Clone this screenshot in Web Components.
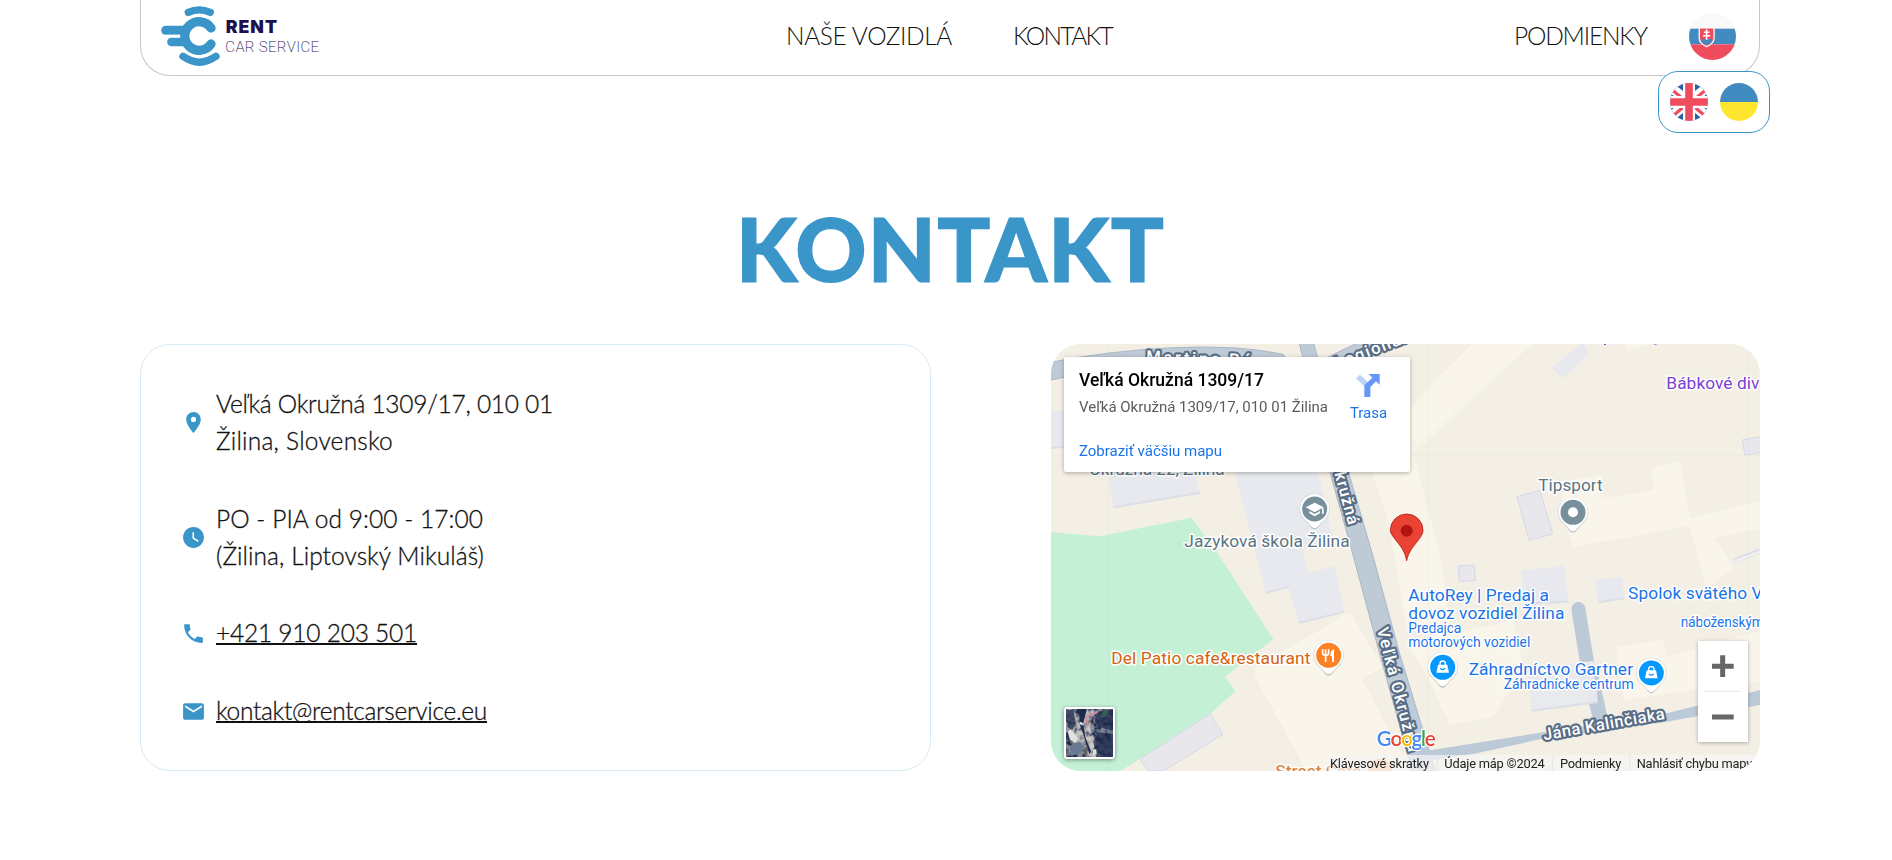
<!DOCTYPE html>
<html lang="sk">
<head>
<meta charset="utf-8">
<title>Kontakt – Rent Car Service</title>
<style>
html,body{margin:0;padding:0;background:#fff}
body{height:860px;overflow:hidden;font-family:Lato,"Open Sans",sans-serif;color:#111}
</style>
</head>
<body>
<rent-page></rent-page>
<script>
const define = (name, html, ready) => customElements.define(name, class extends HTMLElement {
  connectedCallback() {
    if (this.shadowRoot) return;
    const t = document.createElement('template');
    t.innerHTML = html;
    this.attachShadow({mode: 'open'}).append(t.content.cloneNode(true));
    if (ready) ready(this, this.shadowRoot);
  }
});

/* Text run whose tracking is adjusted to fill the width given in w */
define('track-text', `<style>:host{display:inline-block;white-space:nowrap}span{display:inline-block;white-space:pre;text-decoration:inherit}</style><span><slot></slot></span>`, (el, root) => {
  const s = root.querySelector('span'), w = +el.getAttribute('w');
  const n = el.textContent.length;
  s.style.letterSpacing = (w - s.getBoundingClientRect().width) / n + 'px';
  el.style.width = w + 'px';
});

define('brand-logo', `<style>:host{display:block;width:170px;height:75px}svg{display:block;overflow:visible}</style>
<svg width="170" height="75" viewBox="93 0 510 225">
<g fill="none" stroke="#3a95c9" stroke-linecap="round">
<path stroke-width="22" d="M175 37Q207 22 241 37"/>
<path stroke-width="22" d="M159 169Q208 204 258 169"/>
<path stroke-width="27" d="M107 91H165"/><path stroke-width="25" d="M124 126H162"/>
<path stroke="#fff" stroke-width="7" d="M112 108H162" opacity=".9"/>
<path stroke-width="28" d="M243 84A43 43 0 1 0 243 132"/></g>
<g fill="#1d104f">
<text x="287" y="100" font-family="Inter" font-weight="900" font-size="53" textLength="154">RENT</text>
<text x="286" y="155" font-family="Roboto" font-weight="200" font-size="45" textLength="281">CAR SERVICE</text></g>
</svg>`);

const flags = {
sk: `<rect width="60" height="60" fill="#f9f9f9"/><rect y="20" width="60" height="20" fill="#428bc1"/><rect y="40" width="60" height="20" fill="#ef4d5e"/>
<path d="M13 19H32V32Q32 39 22.5 43Q13 39 13 32Z" fill="#ef4d5e" stroke="#fff" stroke-width="1.6"/><path d="M15 35q3-3 5-1.500q2.500-2.500 5 0q3-1.500 5 1.500q-2 4-7.500 6.500q-5.500-2.500-7.500-6.500z" fill="#428bc1"/><path d="M22.500 21V34M19 24.500H26M18 29H27" stroke="#fff" stroke-width="2" fill="none"/>`,
gb: `<rect width="60" height="60" fill="#2d5fa4"/><path d="M0 6L60 54M60 6L0 54" stroke="#fff" stroke-width="15"/><path d="M2 10L28 31M58 10L32 31M2 54L26 34M58 54L34 34" stroke="#ef4d5e" stroke-width="5"/><path d="M30 0V60M0 30H60" stroke="#fff" stroke-width="19"/><path d="M30 0V60M0 30H60" stroke="#ef4d5e" stroke-width="12"/>`,
ua: `<rect width="60" height="30" fill="#428bc1"/><rect y="30" width="60" height="30" fill="#ffe62e"/>`};
define('flag-icon', `<style>:host{display:block;border-radius:50%;overflow:hidden}svg{display:block;width:100%;height:100%}</style><svg viewBox="0 0 60 60"></svg>`, (el, root) => {
  root.querySelector('svg').innerHTML = flags[el.getAttribute('code')];
});

define('lang-menu', `<style>:host{display:flex;box-sizing:border-box;width:112px;height:62px;border:1px solid #3a95c9;border-radius:20px;background:#fff;align-items:center;justify-content:center;gap:12px}
flag-icon{width:38px;height:38px}</style><flag-icon code="gb"></flag-icon><flag-icon code="ua"></flag-icon>`);

define('site-header', `<style>
:host{display:block;position:relative;box-sizing:border-box;width:1620px;height:76px;margin:0 auto 0 140px;border:1px solid #c8c8c8;border-top:0;border-radius:0 0 30px 30px}
header{display:grid;grid-template-columns:625px 165px 62px 99px 402px 133px 1fr;height:75px;padding-left:20px}
nav{display:contents}
a{font:300 24.500px/30px Lato;color:#111;padding-top:21px}
.k{grid-column:4}.p{grid-column:6}
.sk{width:47px;height:47px;margin:12.500px 0 0 42px}
lang-menu{position:absolute;left:1517px;top:71px}
</style>
<header><brand-logo></brand-logo><nav><a><track-text w="166">NAŠE VOZIDLÁ</track-text></a><a class="k"><track-text w="99">KONTAKT</track-text></a><a class="p"><track-text w="133">PODMIENKY</track-text></a></nav><flag-icon class="sk" code="sk"></flag-icon></header>
<lang-menu></lang-menu>`);

const icons = {
pin:'M12 2C8.130 2 5 5.130 5 9c0 5.250 7 13 7 13s7-7.750 7-13c0-3.870-3.130-7-7-7zm0 9.500a2.500 2.500 0 1 1 0-5 2.500 2.500 0 0 1 0 5z',
clock:'M12 2C6.500 2 2 6.500 2 12s4.500 10 10 10 10-4.500 10-10S17.500 2 12 2zm4.200 14.200L11 13V7h1.500v5.200l4.500 2.700-.8 1.300z',
phone:'M6.620 10.790c1.440 2.830 3.760 5.140 6.590 6.590l2.200-2.200c.27-.27.670-.36 1.020-.24 1.120.37 2.330.57 3.570.57.55 0 1 .45 1 1V20c0 .55-.45 1-1 1-9.390 0-17-7.610-17-17 0-.55.45-1 1-1h3.500c.55 0 1 .45 1 1 0 1.250.2 2.450.57 3.570.11.350.03.740-.25 1.020l-2.200 2.200z',
mail:'M20 4H4c-1.100 0-2 .9-2 2v12c0 1.100.9 2 2 2h16c1.100 0 2-.9 2-2V6c0-1.100-.9-2-2-2zm0 4l-8 5-8-5V6l8 5 8-5v2z'};
define('contact-row', `<style>:host{display:flex;align-items:center;gap:10px}svg{width:25px;height:25px;fill:#3a95c9;flex:none;position:relative;top:.5px}div{font:300 24.500px/37px Lato;color:#111;-webkit-text-stroke:.3px #111}</style>
<svg viewBox="0 0 24 24"><path/></svg><div><slot></slot></div>`, (el, root) => {
  root.querySelector('path').setAttribute('d', icons[el.getAttribute('icon')]);
});

define('contact-card', `<style>
:host{display:flex;flex-direction:column;gap:40.700px;box-sizing:border-box;width:791px;height:427px;border:1px solid #d9eaf4;border-radius:30px;padding:40px 40px 0}
a{text-decoration:none;color:inherit;display:block;height:37px;position:relative}
a::after{content:"";display:block;position:absolute;left:0;right:0;top:29px;height:2px;background:#111}
track-text{display:block}
</style>
<contact-row icon="pin"><track-text w="337">Veľká Okružná 1309/17, 010 01</track-text><track-text w="177">Žilina, Slovensko</track-text></contact-row>
<contact-row icon="clock"><track-text w="267">PO - PIA od 9:00 - 17:00</track-text><track-text w="268">(Žilina, Liptovský Mikuláš)</track-text></contact-row>
<contact-row icon="phone"><a><track-text w="201">+421 910 203 501</track-text></a></contact-row>
<contact-row icon="mail"><a><track-text w="271">kontakt@rentcarservice.eu</track-text></a></contact-row>`);

define('place-card', `<style>
:host{display:flex;justify-content:space-between;box-sizing:border-box;width:346px;height:115px;padding:13px 23px 0 15px;background:#fff;border-radius:2px;box-shadow:0 1px 4px rgba(0,0,0,.3);font:400 15px/18px Roboto}
.t{font:500 17.500px/20px Roboto;color:#000;display:block}.a{display:block;margin-top:8px;color:#5b5b5b}
.l{display:block;margin-top:26px;color:#1a73e8}.r{width:37px;color:#1a73e8;margin-top:4px}
svg{display:block;margin:0 0 7px 6px}
</style>
<div><track-text class="t" w="185">Veľká Okružná 1309/17</track-text><track-text class="a" w="249">Veľká Okružná 1309/17, 010 01 Žilina</track-text><track-text class="l" w="143">Zobraziť väčšiu mapu</track-text></div>
<div class="r"><svg width="24" height="23" viewBox="0 0 72 69"><path d="M0 13L12 2L36 25L24 36Z" fill="#bdd1fb"/><path d="M38 0H71V32L60 22L43 39V69H25V34L49 11Z" fill="#6596fa"/></svg><track-text w="37">Trasa</track-text></div>`);

define('zoom-control', `<style>:host{display:flex;flex-direction:column;align-items:center;width:50px;height:101px;background:#fff;box-shadow:0 1px 4px rgba(0,0,0,.3)}svg{display:block}</style>
<svg width="50" height="101" viewBox="0 0 150 303"><path d="M18 151H129" stroke="#e6e6e6" stroke-width="3"/><path d="M42 76H107M74 43V108M42 228H107" stroke="#666" stroke-width="15"/></svg>`);

define('sat-button', `<style>:host{display:block;box-sizing:border-box;width:51px;height:52px;border:2px solid #fff;border-radius:3px;background:#4d5362;box-shadow:0 1px 4px rgba(0,0,0,.4);overflow:hidden}svg{display:block}</style>
<svg width="47" height="48" viewBox="0 0 141 144">
<defs><filter id="g" x="0" y="0" width="1" height="1"><feTurbulence type="fractalNoise" baseFrequency=".06" numOctaves="3" seed="4"/><feColorMatrix values="2.4 0 0 0 -.85  2.4 0 0 0 -.83  2 0 0 0 -.55  0 0 0 0 .75"/></filter></defs>
<rect width="141" height="144" fill="#414b5c"/><path d="M45 0L68 0L62 50L85 130L141 144H60L0 75V0H20L35 30Z" fill="#a3a39c"/>
<path d="M68 5L105 0L82 20L70 55L90 100L82 144L60 85L55 40Z" fill="#b5b2aa"/>
<rect width="141" height="144" filter="url(#g)" opacity=".55"/>
<path d="M38 0H63L51 45L58 85L75 128L70 135L55 85L42 48Z" fill="#1c2752"/>
<path d="M0 0L22 5L30 44L15 70L0 35ZM98 8L141 0V65L118 60L95 50L85 32ZM95 70L141 75V144H90L82 100ZM0 70L35 85L25 100L0 90Z" fill="#18244a" opacity=".72"/>
<path d="M5 68L14 60L38 88L28 102L12 92ZM42 38L51 42L50 50L42 46ZM80 122L91 120L92 136L82 138Z" fill="#e1e1df"/>
<path d="M12 110L40 98L55 112L50 130L15 142Z" fill="#697991"/><path d="M95 8L60 25L66 52" fill="none" stroke="#c98c9a" stroke-width="6"/><path d="M110 8L128 3L120 22L104 26Z" fill="#36604c"/></svg>`);

const pin = (x, y, c, g) => `<g transform="translate(${x} ${y})"><path d="M0 61C-9 61-16 46-29 34A45 45 0 1 1 29 34C16 46 9 61 0 61Z" fill="#8d9ba5" opacity=".55"/><path d="M0 57C-9 57-16 43-29 32A44 44 0 1 1 29 32C16 43 9 57 0 57Z" fill="#fff"/><circle r="37.500" fill="${c}"/>${g}</g>`;
const bag = `<path d="M-14-8H14L19 16H-19Z" fill="#fff"/><path d="M-8-6V-11A8 8 0 0 1 8-11V-6" stroke="#fff" stroke-width="4" fill="none"/><path d="M-7 3Q0 10 7 3" stroke="#0697ff" stroke-width="4" fill="none"/>`;

define('map-canvas', `<style>:host{display:block}svg{display:block}text{font-family:Roboto,sans-serif}
.poi{font-size:52px;paint-order:stroke;stroke:#fff;stroke-width:9px;stroke-linejoin:round}
.sm{font-size:42px}.blue{fill:#1a73e8}.slate{fill:#5a7382}
.road{font-size:50px;font-weight:500;fill:#fff;paint-order:stroke;stroke:#596e86;stroke-width:13px;stroke-linejoin:round}
.foot{font-size:38.500px;fill:#222}.b{fill:#e8e9ee}.s{fill:#e8e8ec;stroke:#d6d8e6;stroke-width:3}.li{fill:#f9f5ea}.r{fill:#bfcad7}.e{stroke:#dcdee8;stroke-width:6;fill:none}</style>
<svg width="709" height="427" viewBox="33 27 2127 1281">
<rect x="33" y="27" width="2127" height="1281" fill="#f4efe5"/>
<path class="li" d="M1110 217L1295 27H1480L1120 355L1200 660L1238 930L1100 880L1045 560L970 330ZM645 1000L930 830L1028 998L965 1030L1110 1308H800L645 1025ZM1565 440L1683 420L1690 490L1842 465L1832 398L1920 380L1950 550L2160 497V580L2025 610L2080 700L2000 760L1948 573L1600 635L1570 560ZM1100 930L1420 855L1450 1000L1360 1145L1230 1170L1155 1010ZM1728 937L1870 915L1880 965L2160 888V1040L1960 1065L1750 1095ZM1755 27H1830L1760 45Z"/>
<path d="M1120 343L1465 40M970 1034L1030 1000" stroke="#efebe0" stroke-width="2"/>
<path d="M33 592L180 604L455 548L527 645L700 913L555 1025L587 1068L510 1137L300 1272L240 1308H33Z" fill="#c4f1d6"/>
<path class="b" d="M33 230L72 225V335L33 340ZM203 405H463L480 475L220 518ZM583 405H833L880 615L788 640L803 713L885 693L912 830L777 865L745 755L677 775ZM1535 98L1622 27H1632L1647 57L1568 133ZM1443 707L1573 692L1585 802L1455 820ZM1665 735L1747 726L1753 790L1675 803Z"/>
<path class="e" d="M33 340L72 335M220 517L480 473M677 774L745 755M777 864L912 830M1455 805L1585 800M1675 802L1753 790"/>
<path class="s" d="M300 1272L510 1137L549 1198L370 1308H325ZM1431 485L1500 466L1538 597L1467 616ZM1255 693L1302 690L1307 736L1258 740ZM2107 315L2165 304V352L2115 361Z"/><path d="M2082 678L2160 648" stroke="#d9dde8" stroke-width="14"/><path d="M2085 678L2160 650" stroke="#f1f1f2" stroke-width="8"/>
<path d="M205 27V1308M1165 27V1308M2125 27V1308M33 361H2160" stroke="#9aa" opacity=".12" stroke-width="2"/>
<g stroke="#a8b7c7" stroke-width="3"><path class="r" d="M20 84Q205 47 400 38T730 58L770 130H500L400 85L220 95L20 138Z"/><path class="r" d="M835 80L960 20H1090L830 130Z"/><path class="r" d="M777 20H820L925 410L998 660L1080 960L1190 1320H1120L1020 960L935 645L868 405Z"/></g>
<path class="r" style="fill:#bccad7" d="M1125 1253L1520 1190L1880 1135L2160 1065V1110L1880 1160L1500 1213L1310 1255L1150 1280Z"/>
<path d="M1615 822L1649 1030L1680 1150" stroke="#bccad7" stroke-width="42" stroke-linecap="round" fill="none"/>
<path class="b" d="M1463 1000L1665 977L1673 1100L1475 1128Z" opacity=".95"/><path class="e" d="M1475 1127L1674 1101"/><path d="M1668 1020L1695 1145" stroke="#bccad7" stroke-width="14"/>
<defs><path id="a" d="M1010 882L1112 1275"/></defs>
<text class="road"><textPath href="#a" textLength="383">Veľká Okružná</textPath></text>
<text class="road" transform="translate(883 415) rotate(75)" textLength="162">kružná</text>
<text class="road" transform="translate(318 82) rotate(2)" textLength="315">Martina Rá</text>
<text class="road" transform="translate(892 102) rotate(-21)" textLength="230">Legionár</text>
<text class="road" transform="translate(1512 1216) rotate(-10)" textLength="370">Jána Kalinčiaka</text>
<text class="poi slate" x="147" y="421" textLength="407">Okružná 22, Žilina</text>
<text class="poi slate" x="433" y="637" textLength="496">Jazyková škola Žilina</text>
<text class="poi slate" x="1495" y="469" textLength="193">Tipsport</text>
<text class="poi" fill="#7b3fd1" x="1879" y="163" textLength="279">Bábkové div</text>
<path d="M1692 27l5 0-2 3zM1842 27h8" stroke="#7b3fd1" stroke-width="3"/>
<text class="poi" fill="#d5620f" x="214" y="988" textLength="597">Del Patio cafe&amp;restaurant</text>
<text class="poi blue" x="1105" y="798" textLength="422">AutoRey | Predaj a</text>
<text class="poi blue" x="1105" y="851" textLength="468">dovoz vozidiel Žilina</text>
<text class="poi sm blue" x="1105" y="895" textLength="159">Predajca</text>
<text class="poi sm blue" x="1105" y="936" textLength="366">motorových vozidiel</text>
<text class="poi blue" x="1286" y="1020" textLength="493">Záhradníctvo Gartner</text>
<text class="poi sm blue" x="1391" y="1063" textLength="390">Záhradnícke centrum</text>
<text class="poi blue" x="1764" y="792" textLength="404">Spolok svätého V</text>
<text class="poi sm blue" x="1922" y="876" textLength="250">náboženským</text>
${pin(824,522,'#78909c','<path d="M-27-5L0-19L27-5L0 10Z" fill="#fff"/><path d="M-16 6V13L0 22L16 13V6L0 15ZM22-2H27V14H22Z" fill="#fff"/>')}
${pin(1599,532,'#78909c','<circle r="15" fill="#fff"/>')}
${pin(866,961,'#ff8126','<path d="M-18-18V-6Q-18 0-9 0Q0 0 0-6V-18M-9-18V20" stroke="#fff" stroke-width="5" fill="none"/><path d="M16-18Q5-16 5 3H10V20H16Z" fill="#fff"/>')}
${pin(1208,997,'#0697ff',bag)}${pin(1834,1014,'#0697ff',bag)}
<path d="M1100 677C1094 645 1080 632 1065 612C1055 600 1051 592 1051 586A49 49 0 0 1 1149 586C1149 596 1142 607 1132 619C1120 635 1105 650 1100 677Z" fill="#ea4335" stroke="#bd2b22" stroke-width="3"/><circle cx="1100" cy="587" r="18" fill="#b31412"/>
<g opacity=".75"><text class="poi" fill="#d5620f" x="706" y="1326" textLength="258" font-weight="500">Street Cafe</text>${pin(1021,1307,'#ff9c59','')}</g>
<rect x="865" y="1260" width="1295" height="48" fill="#f5f5f5" opacity=".72"/>
<text x="1010" y="1233" style="font-family:Lato" font-size="62" textLength="177" stroke="#fff" stroke-width="7" paint-order="stroke" font-weight="600"><tspan fill="#4285f4">G</tspan><tspan fill="#ea4335">o</tspan><tspan fill="#fbbc04">o</tspan><tspan fill="#4285f4">g</tspan><tspan fill="#34a853">l</tspan><tspan fill="#ea4335">e</tspan></text>
<g class="foot"><text x="870" y="1299" textLength="297">Klávesové skratky</text><text x="1213" y="1299" textLength="301">Údaje máp ©2024</text><text x="1560" y="1299" textLength="184">Podmienky</text><text x="1790" y="1299" textLength="347">Nahlásiť chybu mapy</text></g>
<path d="M1192 1262V1308M1537 1262V1308M1769 1262V1308" stroke="#e3e1dc" stroke-width="2"/>
</svg>`);

define('map-view', `<style>:host{display:block;position:relative;width:709px;height:427px;border-radius:30px;overflow:hidden}
place-card{position:absolute;left:13px;top:13px}zoom-control{position:absolute;left:647px;top:297px}sat-button{position:absolute;left:13px;top:363px}</style>
<map-canvas></map-canvas><place-card></place-card><sat-button></sat-button><zoom-control></zoom-control>`);

define('rent-page', `<style>:host{display:block;width:1892px;height:860px}
h1{margin:111.500px 0 0 736px;height:156.500px;font:900 88px/120px Lato;color:#3a95c9;-webkit-text-stroke:1.2px #3a95c9}
main{display:flex;gap:120px;padding-left:140px}</style>
<site-header></site-header><h1><track-text w="429">KONTAKT</track-text></h1><main><contact-card></contact-card><map-view></map-view></main>`);
</script>
</body>
</html>
